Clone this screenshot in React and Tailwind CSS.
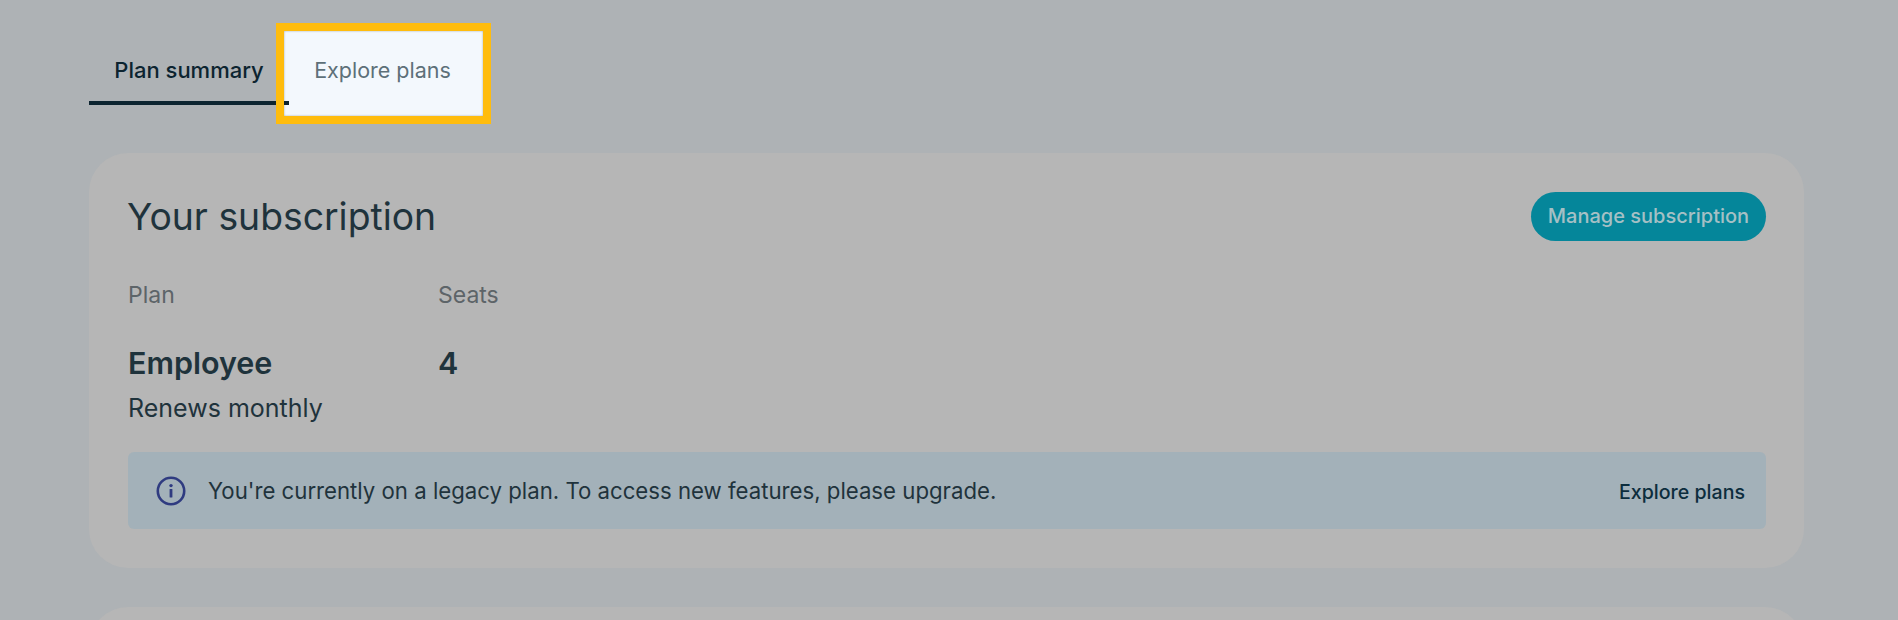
import React from "react";

function InfoIcon() {
  return (
    <svg width="30" height="30" viewBox="0 0 30 30" fill="none" className="shrink-0">
      <circle cx="15" cy="15" r="13.2" stroke="#2f3b80" strokeWidth="2.6" />
      <rect x="13.6" y="13" width="2.8" height="8.5" rx="0.6" fill="#2f3b80" />
      <circle cx="15" cy="9.6" r="1.7" fill="#2f3b80" />
    </svg>
  );
}

export default function App() {
  return (
    <div className="h-[620px] overflow-hidden bg-[#aeb2b5] px-[89px] font-['Inter',sans-serif] text-[#1f333c]">
      {/* Tabs */}
      <div className="flex h-[153px] items-start pt-[31px]">
        <div className="relative z-10 flex h-[74px] w-[200px] justify-center border-b-[4px] border-[#0c2430] pt-[24px] text-[22px] font-medium leading-[30px] text-[#0c2430]">
          Plan summary
        </div>
        <div className="relative -ml-[5px] h-[85px] w-[199px] bg-[#f3f8fd] pr-[2px] pt-[24px] text-center text-[21.5px] leading-[30px] text-[#5d7079] shadow-[inset_0_0_2px_#9aa0a4]">
          Explore plans
          <div className="absolute -inset-[8px] z-20 border-[8px] border-[#ffbc0d]" />
        </div>
      </div>

      {/* Subscription card */}
      <section className="h-[415px] w-[1715px] rounded-[39px] bg-[#b6b6b6] pl-[38px] pr-[38px] pt-[39px]">
        <div className="flex items-center justify-between">
          <h2 className="text-[37.3px] leading-[49px]">Your subscription</h2>
          <button className="h-[49px] w-[235px] rounded-full bg-[#05869a] pb-[2px] text-[20px] font-medium text-[#a5c0c5]">
            Manage subscription
          </button>
        </div>

        <div className="mt-[39px] flex">
          <div className="w-[311px]">
            <div className="pl-px text-[23px] leading-[30px] text-[#5d6468]">Plan</div>
            <div className="mt-[33px] pl-px text-[30.5px] font-semibold leading-[39px]">Employee</div>
            <div className="mt-[9px] pl-px text-[25px] leading-[34px]">Renews monthly</div>
          </div>
          <div>
            <div className="text-[23px] leading-[30px] text-[#5d6468]">Seats</div>
            <div className="mt-[33px] text-[30.5px] font-semibold leading-[39px]">4</div>
          </div>
        </div>

        <div className="ml-px mt-[27px] flex h-[77px] items-center rounded-[6px] bg-[#a3b1b9] pl-[28px] pr-[21px]">
          <InfoIcon />
          <span className="ml-[22px] flex-1 pt-px text-[22.2px]">
            You're currently on a legacy plan. To access new features, please upgrade.
          </span>
          <span className="pt-[5px] text-[19.6px] font-medium text-[#0c2d3d]">Explore plans</span>
        </div>
      </section>

      {/* Next card, cut off by the window */}
      <div className="mt-[39px] h-[120px] w-[1715px] rounded-[39px] bg-[#b6b6b6]" />
    </div>
  );
}
